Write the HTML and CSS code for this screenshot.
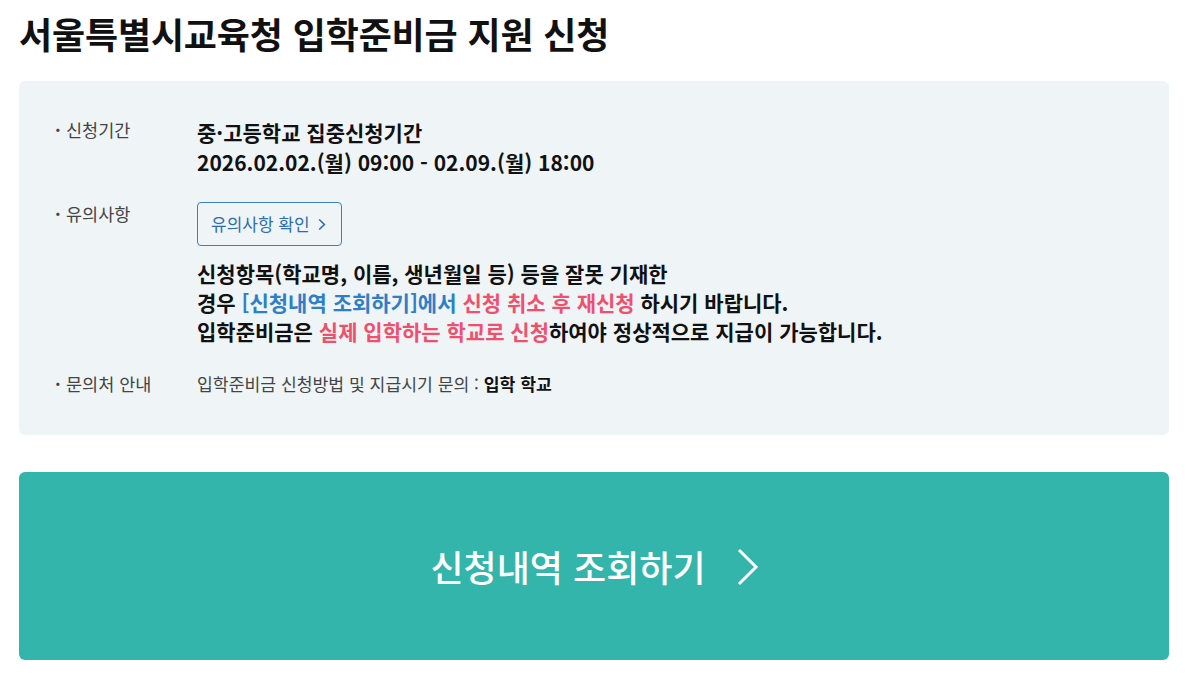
FILE: index.html
```html
<!DOCTYPE html>
<html lang="ko">
<head>
<meta charset="utf-8">
<link rel="stylesheet" href="styles.css">
</head>
<body>
<div class="page">
  <h1 class="title">서울특별시교육청 입학준비금 지원 신청</h1>
  <div class="panel">
    <div class="row row-period">
      <div class="label">신청기간</div>
      <div class="value strong">
        <div>중·고등학교 집중신청기간</div>
        <div>2026.02.02.(월) 09:00 - 02.09.(월) 18:00</div>
      </div>
    </div>
    <div class="row row-notice">
      <div class="label">유의사항</div>
      <div class="value">
        <a class="notice-btn" href="#">유의사항 확인
          <svg class="notice-chev" width="8" height="13" viewBox="0 0 8 13"><path d="M1.2 1.5 L6.4 6.5 L1.2 11.5" fill="none" stroke="currentColor" stroke-width="1.6"/></svg>
        </a>
        <p class="notice-text strong">
          신청항목(학교명, 이름, 생년월일 등) 등을 잘못 기재한<br>
          경우 <span class="blue">[신청내역 조회하기]에서</span> <span class="red">신청 취소 후 재신청</span> 하시기 바랍니다.<br>
          입학준비금은 <span class="red">실제 입학하는 학교로 신청</span>하여야 정상적으로 지급이 가능합니다.
        </p>
      </div>
    </div>
    <div class="row row-contact">
      <div class="label">문의처 안내</div>
      <div class="value contact">입학준비금 신청방법 및 지급시기 문의 : <b>입학 학교</b></div>
    </div>
  </div>
  <a class="big-btn" href="#">
    <span class="big-btn-text">신청내역 조회하기</span>
    <svg class="big-chev" width="22" height="38" viewBox="0 0 22 38"><path d="M2 2 L19 19 L2 36" fill="none" stroke="currentColor" stroke-width="3"/></svg>
  </a>
</div>
</body>
</html>
```
FILE: styles.css
```css
* { box-sizing: border-box; }
html, body { margin: 0; padding: 0; background: #fff; }
body {
  font-family: "Noto Sans CJK KR", "Noto Sans", sans-serif;
  color: #111;
}
.page {
  padding: 9px 17px 0 19px;
}
.title {
  margin: 0;
  font-size: 36px;
  font-weight: 700;
  line-height: 48px;
  color: #111;
  letter-spacing: -0.15px;
}
.panel {
  margin-top: 24px;
  background: #eff4f7;
  border-radius: 6px;
  padding: 36px 36px 39px 36px;
  display: flex;
  flex-direction: column;
  gap: 25px;
}
.row {
  display: flex;
}
.label {
  width: 142px;
  flex: none;
  font-size: 17.5px;
  line-height: 24px;
  color: #444;
  position: relative;
  padding-left: 11px;
}
.label::before {
  content: "·";
  position: absolute;
  left: 0;
  top: 0;
  font-weight: 700;
}
.value {
  font-size: 21px;
  line-height: 30px;
}
.strong { font-weight: 700; color: #111; }
.row-period .label { margin-top: 1px; }
.notice-btn {
  display: inline-flex;
  align-items: center;
  gap: 8px;
  height: 44px;
  padding: 0 15px 0 13px;
  border: 1px solid #3f7fbf;
  border-radius: 4px;
  background: transparent;
  color: #2e6dad;
  font-size: 17px;
  text-decoration: none;
}
.notice-chev { color: #2e6dad; margin-top: 1px; }
.notice-text {
  margin: 13px 0 0 0;
  font-size: 21px;
  line-height: 29px;
}
.row-notice .label { margin-top: 0; }
.blue { color: #2f7ec8; }
.red { color: #f0506e; }
.row-contact { margin-top: 1px; }
.contact {
  font-size: 17.2px;
  line-height: 24px;
  color: #444;
}
.contact b { color: #111; font-weight: 700; }
.big-btn {
  margin-top: 37px;
  height: 188px;
  border-radius: 6px;
  background: #33b5ab;
  color: #fff;
  display: flex;
  align-items: center;
  justify-content: center;
  gap: 31px;
  text-decoration: none;
  padding-left: 1px;
}
.big-btn-text {
  font-size: 36px;
  font-weight: 500;
  line-height: 1;
}
.big-chev { margin-top: 2px; }
```
